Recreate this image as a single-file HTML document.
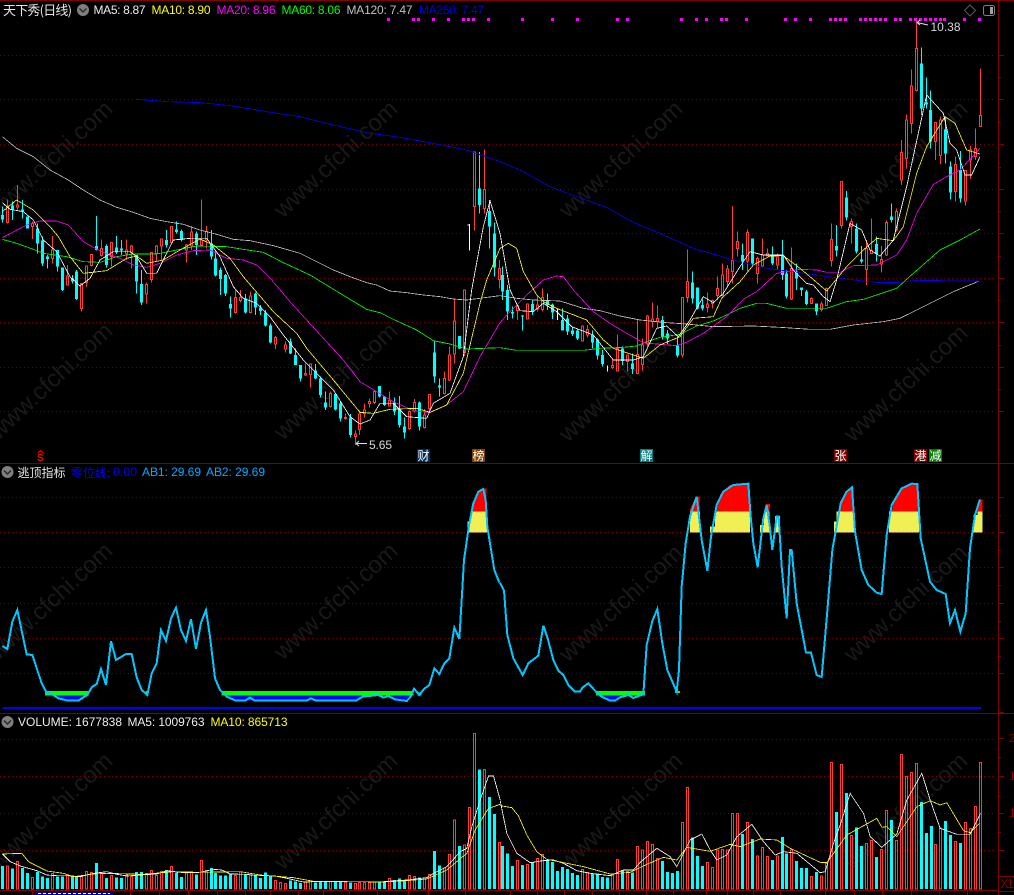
<!DOCTYPE html>
<html><head><meta charset="utf-8"><title>天下秀(日线)</title>
<style>
html,body{margin:0;padding:0;background:#000;width:1014px;height:895px;overflow:hidden}
svg{display:block;position:absolute;left:0;top:0}
text{font-family:"Liberation Sans","WenQuanYi Zen Hei","Noto Sans CJK SC",sans-serif;font-size:12px}
.cj{font-family:"WenQuanYi Zen Hei","Noto Sans CJK SC",sans-serif;font-size:12px}
.wm{font-size:24px;fill:#191919}
.rw{stroke:#ff3c3c;stroke-width:3;fill:none}
.rb{stroke:#ff3c3c;stroke-width:3;fill:#000}
.rv{stroke:#ff3c3c;stroke-width:3;fill:none}
.cw{stroke:#0ff;stroke-width:3;fill:none}
.cb{stroke:#0ff;stroke-width:9;fill:none}
.wt{stroke:#fff;stroke-width:3;fill:none}
.m5{stroke:#fff;stroke-width:2.4;fill:none}
.m10{stroke:#ff0;stroke-width:2.4;fill:none}
.m20{stroke:#f0f;stroke-width:2.4;fill:none}
.m60{stroke:#0f0;stroke-width:2.4;fill:none}
.m120{stroke:#c0c0c0;stroke-width:2.4;fill:none}
.m250{stroke:#00f;stroke-width:2.4;fill:none}
.ab{stroke:#00c8ff;stroke-width:6;fill:none}
.grid{stroke:#6e0000;stroke-width:1;stroke-dasharray:1 3;fill:none}
</style></head><body>
<svg width="1014" height="895" viewBox="0 0 1014 895" xmlns="http://www.w3.org/2000/svg">
<!-- watermark -->
<g class="wm">
<text class="wm" transform="translate(-2,219) rotate(-43)">www.cfchi.com</text>
<text class="wm" transform="translate(283,219) rotate(-43)">www.cfchi.com</text>
<text class="wm" transform="translate(568,219) rotate(-43)">www.cfchi.com</text>
<text class="wm" transform="translate(853,219) rotate(-43)">www.cfchi.com</text>
<text class="wm" transform="translate(-2,441) rotate(-43)">www.cfchi.com</text>
<text class="wm" transform="translate(283,441) rotate(-43)">www.cfchi.com</text>
<text class="wm" transform="translate(568,443) rotate(-43)">www.cfchi.com</text>
<text class="wm" transform="translate(853,443) rotate(-43)">www.cfchi.com</text>
<text class="wm" transform="translate(-2,661) rotate(-43)">www.cfchi.com</text>
<text class="wm" transform="translate(283,661) rotate(-43)">www.cfchi.com</text>
<text class="wm" transform="translate(568,663) rotate(-43)">www.cfchi.com</text>
<text class="wm" transform="translate(853,663) rotate(-43)">www.cfchi.com</text>
<text class="wm" transform="translate(-2,871) rotate(-43)">www.cfchi.com</text>
<text class="wm" transform="translate(283,871) rotate(-43)">www.cfchi.com</text>
<text class="wm" transform="translate(568,871) rotate(-43)">www.cfchi.com</text>
<text class="wm" transform="translate(853,871) rotate(-43)">www.cfchi.com</text>
</g>
<!-- grid -->
<path class="grid" shape-rendering="crispEdges" d="M0 55.5H996M0 99.5H996M0 144.5H996M0 189.5H996M0 233.5H996M0 278.5H996M0 322.5H996M0 367.5H996M0 411.5H996M0 497.5H996M0 532.5H996M0 567.5H996M0 603.5H996M0 638.5H996M0 673.5H996M0 739.5H996M0 776.5H996M0 813.5H996M0 850.5H996"/>
<g shape-rendering="crispEdges" transform="scale(.333333)">
<!-- volume bars left -->
<g transform="translate(.5,2130)">
<path class="cb" d="M7 468V537M37 475V537M67 474V537M82 489V537M112 486V537M127 500V537M142 504V537M172 500V537M187 500V537M217 497V537M229 500V537M289 459V537M319 504V537M349 502V537M364 504V537M409 486V537M424 486V537M499 480V537M529 487V537M544 501V537M589 494V537M634 474V537M646 489V537M661 497V537M676 497V537M691 491V537M736 493V537M766 497V537M781 504V537M796 487V537M811 496V537M871 511V537M886 514V537M901 519V537M946 517V537M961 516V537M976 514V537M1006 514V537M1021 514V537M1051 518V537M1138 517V537M1153 518V537M1183 510V537M1198 505V537M1213 512V537M1258 503V537M1303 423V537M1318 466V537M1378 408V537M1438 178V537M1468 261V537M1483 312V537"/>
<path class="rv" d="M19 468h6V537h-6zM49 454h6V537h-6zM94 502h6V537h-6zM154 491h6V537h-6zM199 497h6V537h-6zM241 500h6V537h-6zM256 484h6V537h-6zM271 487h6V537h-6zM301 487h6V537h-6zM331 496h6V537h-6zM376 495h6V537h-6zM391 500h6V537h-6zM436 490h6V537h-6zM451 481h6V537h-6zM466 497h6V537h-6zM481 484h6V537h-6zM511 469h6V537h-6zM556 489h6V537h-6zM571 488h6V537h-6zM601 451h6V537h-6zM616 482h6V537h-6zM703 496h6V537h-6zM718 486h6V537h-6zM748 495h6V537h-6zM823 511h6V537h-6zM838 517h6V537h-6zM853 520h6V537h-6zM913 516h6V537h-6zM928 513h6V537h-6zM988 514h6V537h-6zM1033 517h6V537h-6zM1063 520h6V537h-6zM1075 518h6V537h-6zM1090 518h6V537h-6zM1105 517h6V537h-6zM1120 516h6V537h-6zM1165 505h6V537h-6zM1225 496h6V537h-6zM1240 499h6V537h-6zM1270 504h6V537h-6zM1285 493h6V537h-6zM1330 474h6V537h-6zM1345 433h6V537h-6zM1360 330h6V537h-6zM1390 405h6V537h-6zM1405 292h6V537h-6zM1420 70h6V537h-6zM1450 178h6V537h-6zM1495 397h6V537h-6z"/>
<path class="m5" d="M7 432L30 455L60 468L110 482L140 495L170 497L200 497L240 500L280 490L320 485L350 493L380 498L420 495L470 492L500 482L550 488L600 487L640 478L665 480L690 492L740 493L770 497L820 497L860 505L910 516L950 515L1150 515L1220 510L1280 503L1300 490L1340 470L1380 425L1400 415L1415 350L1440 270L1465 198L1480 198L1500 270"/>
<path class="m10" d="M7 432L65 430L85 455L140 483L190 490L220 500L280 492L320 490L430 493L520 485L600 487L720 485L780 495L880 503L940 514L1150 516L1220 512L1280 507L1340 480L1400 430L1425 360L1465 295L1500 283"/>
</g>
<!-- volume bars right -->
<g transform="translate(1500.5,2130)">
<path class="cb" d="M7 408V537M22 430V537M37 468V537M67 465V537M97 457V537M142 450V537M157 456V537M172 483V537M187 471V537M202 477V537M217 489V537M232 495V537M277 490V537M292 490V537M307 501V537M322 503V537M367 480V537M397 487V537M487 453V537M502 486V537M517 489V537M532 483V537M577 382V537M592 438V537M607 468V537M727 372V537M757 387V537M817 450V537M847 381V537M859 430V537M889 453V537M904 474V537M919 474V537M949 486V537M1009 306V537M1039 249V537M1069 352V537M1084 408V537M1129 441V537M1174 330V537M1264 276V537M1279 369V537M1294 348V537M1336 333V537M1351 375V537M1381 399V537"/>
<path class="rv" d="M49 451h6V537h-6zM79 463h6V537h-6zM109 445h6V537h-6zM124 433h6V537h-6zM244 478h6V537h-6zM259 487h6V537h-6zM334 497h6V537h-6zM349 448h6V537h-6zM379 484h6V537h-6zM409 409h6V537h-6zM424 420h6V537h-6zM439 394h6V537h-6zM454 403h6V537h-6zM469 445h6V537h-6zM544 337h6V537h-6zM559 232h6V537h-6zM619 457h6V537h-6zM634 472h6V537h-6zM649 420h6V537h-6zM664 418h6V537h-6zM679 420h6V537h-6zM694 310h6V537h-6zM709 310h6V537h-6zM739 337h6V537h-6zM769 438h6V537h-6zM784 412h6V537h-6zM799 439h6V537h-6zM829 438h6V537h-6zM871 420h6V537h-6zM931 499h6V537h-6zM961 498h6V537h-6zM976 460h6V537h-6zM991 157h6V537h-6zM1021 163h6V537h-6zM1051 376h6V537h-6zM1096 400h6V537h-6zM1111 391h6V537h-6zM1141 418h6V537h-6zM1156 301h6V537h-6zM1186 391h6V537h-6zM1201 133h6V537h-6zM1216 199h6V537h-6zM1231 187h6V537h-6zM1246 160h6V537h-6zM1303 403h6V537h-6zM1318 354h6V537h-6zM1363 394h6V537h-6zM1393 337h6V537h-6zM1408 355h6V537h-6zM1423 289h6V537h-6zM1438 157h6V537h-6z"/>
<path class="m5" d="M0 272L20 370L50 430L90 458L130 452L160 450L190 460L230 482L270 490L330 497L370 480L400 480L420 457L470 415L510 440L530 470L570 390L605 372L630 420L650 450L680 435L710 380L755 343L790 395L825 435L850 425L890 430L960 488L975 485L1000 400L1020 345L1050 250L1090 310L1110 380L1145 412L1190 372L1220 270L1265 190L1290 270L1320 355L1370 373L1410 373L1441 310"/>
<path class="m10" d="M0 287L35 293L55 318L80 375L110 425L140 448L180 456L250 470L330 492L390 487L440 463L490 442L530 450L560 412L630 424L690 403L720 410L780 387L830 390L870 415L960 457L980 458L1040 375L1130 325L1145 352L1160 350L1190 380L1250 290L1290 272L1320 285L1340 278L1390 362L1410 368L1438 340"/>
</g>
<!-- candles zoom10 group -->
<g transform="translate(.5,480)">
<path class="cw" d="M7 140V188M37 125V180M67 120V175M82 170V205M112 190V280M127 230V318M142 285V325M172 270V335M187 322V393M217 345V370M229 330V420M289 168V272M319 253V323M349 228V282M364 240V285M409 285V400M424 330V435M499 210V262M529 185V220M544 208V245M589 215V285M634 210V298M646 275V350M661 322V405M676 342V408M691 410V472"/>
<path class="cb" d="M7 165V178M37 137V150M67 148V153M82 170V205M112 205V250M127 242V310M142 289V297M172 270V320M187 322V390M217 355V365M229 335V417M289 258V270M319 258V315M349 262V278M364 265V272M409 285V365M424 372V428M499 240V255M529 208V216M544 213V240M589 220V255M634 250V290M646 295V347M661 330V357M676 345V400M691 432V445"/>
<path class="rw" d="M22 118V190M52 75V150M97 185V237M157 228V310M202 315V375M244 370V455M259 318V380M274 283V320M304 238V290M334 248V320M379 238V300M394 255V325M439 368V430M454 278V368M469 255V305M484 235V300M514 198V250M559 252V308M574 198V270M604 118V260M619 198V265"/>
<path class="rb" d="M19 138h6V188h-6zM49 135h6V141h-6zM94 190h6V200h-6zM154 270h6V295h-6zM199 348h6V375h-6zM241 370h6V445h-6zM256 318h6V368h-6zM271 283h6V317h-6zM301 265h6V287h-6zM331 248h6V290h-6zM376 270h6V282h-6zM391 258h6V278h-6zM436 374h6V402h-6zM451 278h6V358h-6zM466 258h6V280h-6zM481 237h6V258h-6zM511 200h6V248h-6zM556 255h6V270h-6zM571 216h6V258h-6zM601 240h6V255h-6zM616 215h6V240h-6z"/>
</g>
<!-- candles zoom3 group -->
<g transform="translate(.5,840)">
<path class="cw" d="M736 42V100M766 38V105M781 75V105M796 90V140M811 130V190M871 175V222M886 205V255M901 255V305M946 252V297M961 290V352M976 335V390M1006 340V392M1021 365V425M1051 402V472M1138 318V352M1153 348V378M1183 352V405M1198 348V442M1213 412V475M1258 365V452M1303 182V308M1318 295V350M1378 168V207"/>
<path class="cb" d="M736 55V97M766 40V83M781 83V93M796 97V137M811 137V187M871 185V220M886 225V255M901 255V295M946 272V295M961 295V345M976 367V383M1006 342V388M1021 370V415M1051 412V465M1138 318V350M1153 350V375M1183 367V395M1198 388V435M1213 440V458M1258 367V440M1303 218V290M1318 317V322M1378 168V205"/>
<path class="rw" d="M706 30V100M721 30V68M751 35V100M826 168V207M856 185V218M916 250V288M931 252V323M991 335V382M1036 400V418M1066 452V495M1078 392V465M1093 370V412M1108 355V382M1123 330V372M1168 335V380M1228 392V450M1243 357V397M1273 387V445M1288 342V395M1333 275V343M1348 200V303M1363 55V250M1393 30V228"/>
<path class="rb" d="M703 52h6V98h-6zM718 53h6V62h-6zM748 48h6V98h-6zM823 172h6V192h-6zM853 195h6V207h-6zM913 280h6V285h-6zM928 252h6V283h-6zM988 340h6V380h-6zM1033 412h6V416h-6zM1063 462h6V470h-6zM1075 402h6V448h-6zM1090 390h6V400h-6zM1105 365h6V370h-6zM1120 335h6V368h-6zM1165 362h6V378h-6zM1225 395h6V445h-6zM1240 367h6V393h-6zM1270 405h6V442h-6zM1285 343h6V385h-6zM1330 295h6V340h-6zM1345 225h6V300h-6zM1360 123h6V222h-6zM1390 30h6V218h-6z"/>
</g>
<!-- candles zoom1 group -->
<g transform="translate(.5,0)">
<path class="wt" d="M1408 672V752M1402 675H1408"/>
<path class="cw" d="M1438 456V640M1468 600V745M1483 668V830"/>
<path class="cb" d="M1438 565V615M1468 633V680M1483 700V803"/>
<path class="rw" d="M1423 456V692M1453 448V640M1498 780V865"/>
<path class="rb" d="M1420 456h6V620h-6zM1450 568h6V625h-6zM1495 805h6V838h-6z"/>
</g>
<!-- candles zoom4 group -->
<g transform="translate(1500.5,720)">
<path class="wt" d="M172 205V240M322 377V395"/>
<path class="cw" d="M7 80V180M22 135V240M37 200V235M67 225V272M97 180V225M142 160V210M157 190V237M187 205V272M202 225V285M217 260V288M232 265V300M277 272V325M292 295V358M307 330V380M367 320V375M397 340V402M487 228V298M502 270V312M532 290V352M577 95V190M592 143V208M607 178V212M904 142V168M919 150V195M949 190V225"/>
<path class="cb" d="M7 105V155M22 150V215M37 216V220M67 226V230M97 192V215M142 180V195M157 193V218M187 240V272M202 235V275M217 272V282M232 272V295M277 285V308M292 298V347M307 345V372M367 325V363M397 370V387M487 240V290M502 280V295M532 315V347M577 128V175M592 143V205M607 195V205M904 142V150M919 155V192M949 190V215"/>
<path class="rw" d="M52 197V240M82 192V237M112 165V215M127 145V215M247 258V305M262 255V292M337 360V387M352 283V395M382 345V395M412 237V402M427 295V392M442 225V320M457 187V262M472 197V265M547 172V352M562 28V188M622 157V218M637 178V205M652 110V180M667 70V170M682 75V140M934 172V192M964 185V215M979 142V197"/>
<path class="rb" d="M49 197h6V212h-6zM79 192h6V237h-6zM109 195h6V207h-6zM124 172h6V208h-6zM244 258h6V303h-6zM259 268h6V285h-6zM334 377h6V383h-6zM349 325h6V393h-6zM379 345h6V365h-6zM409 343h6V400h-6zM424 315h6V373h-6zM439 228h6V312h-6zM454 237h6V245h-6zM469 235h6V245h-6zM544 172h6V345h-6zM559 125h6V172h-6zM619 192h6V203h-6zM634 182h6V190h-6zM649 145h6V167h-6zM664 105h6V167h-6zM679 87h6V125h-6zM931 175h6V190h-6zM961 192h6V208h-6zM976 145h6V197h-6z"/>
</g>
<!-- candles zoom2 group -->
<g transform="translate(1500.5,0)">
<path class="cw" d="M727 730V810M757 715V795M817 740V795M847 720V840M859 810V895M889 790V870M1009 675V770M1039 573V662M1069 670V760M1084 738V790M1129 710V785M1174 610V668M1264 142V345M1279 232V325M1291 272V445M1336 350V490M1351 485V598M1381 453V608"/>
<path class="cb" d="M727 765V785M757 715V790M817 765V790M847 765V825M859 820V890M889 815V835M1009 738V752M1039 592V652M1069 685V755M1084 778V785M1129 732V762M1174 650V660M1264 190V325M1279 308V313M1291 330V425M1336 388V460M1351 500V578M1381 510V595"/>
<path class="rw" d="M697 618V850M712 695V770M742 688V815M772 770V850M787 715V800M802 745V770M832 760V810M874 742V900M994 670V800M1024 545V685M1054 655V730M1099 720V855M1114 655V762M1144 738V818M1159 662V768M1189 625V695M1204 420V555M1219 343V505M1234 208V400M1249 62V275M1306 367V480M1321 350V492M1366 470V605M1396 510V617M1411 438V537M1426 385V480M1441 205V380"/>
<path class="rb" d="M694 782h6V815h-6zM709 725h6V745h-6zM739 697h6V783h-6zM769 775h6V820h-6zM784 765h6V798h-6zM799 760h6V768h-6zM829 770h6V795h-6zM871 805h6V897h-6zM991 718h6V782h-6zM1021 545h6V677h-6zM1051 665h6V680h-6zM1096 745h6V808h-6zM1111 752h6V760h-6zM1141 778h6V792h-6zM1156 668h6V765h-6zM1186 635h6V690h-6zM1201 458h6V540h-6zM1216 360h6V475h-6zM1231 258h6V370h-6zM1246 145h6V272h-6zM1303 367h6V425h-6zM1318 360h6V467h-6zM1363 493h6V575h-6zM1393 512h6V603h-6zM1408 450h6V480h-6zM1423 445h6V470h-6zM1438 347h6V380h-6z"/>
</g>
<!-- MA120 -->
<path class="m120" d="M7 410L50 445L100 470L150 510L205 540L250 570L300 600L350 622L400 637L450 655L500 665L550 673L600 690L650 703L700 718L750 722L820 737L900 760L950 785L1000 810L1050 830L1100 848L1130 855L1170 873L1220 878L1270 885L1320 890L1360 897L1400 900L1500 887L1550 895L1600 900L1680 903L1750 925L1800 932L1860 948L1920 960L2000 968L2060 972L2140 980L2260 978L2340 982L2430 988L2490 988L2560 975L2650 965L2700 955L2750 930L2800 905L2860 875L2940 842"/>
<!-- MA250 -->
<path class="m250" d="M410 298L500 305L600 308L700 318L800 335L900 350L1000 375L1100 398L1200 412L1300 430L1400 450L1500 485L1560 510L1650 560L1730 590L1820 622L1900 667L1980 700L2080 745L2200 780L2300 805L2400 818L2500 832L2580 842L2640 848L2700 847L2750 841L2900 843L2940 843"/>
<!-- MA60 -->
<path class="m60" d="M7 718L50 730L100 748L130 760L200 770L250 785L300 787L350 770L400 762L470 762L530 750L590 738L680 740L730 748L790 757L850 788L930 825L1050 898L1100 928L1140 938L1180 958L1250 990L1300 1022L1350 1032L1400 1047L1500 1043L1550 1051L1750 1051L1800 1045L1870 1042L1910 1038L1940 1025L1980 1012L2040 1003L2090 978L2140 963L2180 945L2220 925L2270 910L2300 910L2360 925L2480 925L2540 905L2590 898L2690 865L2740 820L2820 750L2880 720L2940 687"/>
<!-- MA20 -->
<path class="m20" d="M7 713L80 675L120 663L170 663L205 675L250 725L280 742L320 762L360 775L400 795L440 802L480 790L530 765L580 752L630 750L680 775L730 780L770 795L815 840L870 905L920 960L970 1015L1030 1080L1080 1145L1130 1175L1180 1205L1240 1232L1290 1238L1340 1215L1390 1175L1440 1070L1500 968L1530 935L1580 885L1630 840L1670 828L1690 830L1720 870L1780 935L1830 970L1880 1000L1930 1028L1970 1032L2030 1037L2060 1027L2110 1000L2180 950L2230 898L2270 875L2330 820L2400 808L2450 810L2480 817L2520 817L2560 797L2630 795L2690 765L2720 720L2750 640L2800 553L2840 530L2880 510L2940 445"/>
<!-- MA10 -->
<path class="m10" d="M7 635L50 600L100 630L150 680L175 710L210 770L250 820L320 812L380 775L410 768L440 790L490 780L540 750L600 717L640 735L690 775L730 830L790 900L820 935L890 1000L920 1045L1000 1140L1080 1237L1120 1240L1170 1228L1250 1225L1290 1237L1340 1215L1390 1120L1440 910L1460 840L1500 745L1525 730L1550 745L1570 815L1610 885L1630 905L1670 925L1760 960L1810 1020L1840 1045L1930 1075L1980 1035L2040 1010L2080 955L2140 950L2165 895L2220 845L2260 795L2310 768L2350 767L2400 805L2430 830L2480 873L2540 800L2590 750L2630 715L2650 718L2680 722L2710 680L2750 520L2780 440L2835 350L2865 370L2900 450L2940 462"/>
<!-- MA5 -->
<path class="m5" d="M7 608L30 628L70 635L100 660L130 720L170 755L210 830L240 858L270 835L300 780L340 755L390 755L410 770L440 820L470 820L520 720L570 715L620 715L660 770L700 860L730 895L770 910L810 950L850 1005L910 1080L960 1130L1000 1170L1050 1250L1080 1272L1110 1260L1140 1210L1180 1210L1220 1250L1280 1255L1300 1210L1350 1180L1390 1070L1415 870L1450 680L1470 602L1500 700L1530 870L1560 932L1600 935L1630 910L1670 935L1715 980L1780 1005L1840 1080L1900 1080L1930 1070L1970 985L2000 978L2035 1010L2070 960L2110 890L2140 908L2170 880L2220 800L2250 755L2290 765L2350 765L2380 810L2420 850L2440 855L2470 890L2490 905L2510 840L2550 670L2585 690L2610 750L2640 768L2680 720L2720 560L2780 285L2830 340L2850 430L2870 450L2895 525L2915 525L2940 470"/>
<!-- AB panel fills -->
<g transform="translate(0,1380)">
<path fill="#00f" d="M165 707H250L235 722H205L175 715zM680 707H1085L1068 722H708zM1175 707H1230L1220 723H1185z"/>
<path fill="#0f0" d="M135 693H265V707H135zM437 693H445V707H437zM665 693H1240V707H665zM1252 697H1265V707H1252z"/>
<path fill="#f0f055" d="M1402 185H1412V155H1462V218H1402z"/>
<path fill="#f00" d="M1418 155L1420 130L1435 95L1460 84V155z"/>
<path fill="#00f" d="M7 741H1500V747H7z"/>
</g>
<g transform="translate(1500,1380)">
<path fill="#00f" d="M305 707H360L345 722H330z"/>
<path fill="#0f0" d="M288 693H435V707H288zM525 693H540V699H525z"/>
<path fill="#f0f055" d="M570 155H600V218H570zM630 200H645V155H750V218H630zM780 195H792V155H808V218H780zM825 168H840V218H825zM1002 185H1010V155H1063V218H1002zM1167 155H1257V218H1167zM1420 165H1432V155H1448V218H1420z"/>
<path fill="#f00" d="M570 155V148L585 115L598 108V155zM650 155L660 105L690 75L748 70V155zM796 155V132H810L808 155zM1018 155L1020 125L1040 92L1060 82V155zM1175 155L1185 110L1215 78L1250 70L1257 155zM1432 155L1436 118H1448V155z"/>
<path fill="#00f" d="M0 741H1443V747H0z"/>
</g>
<g transform="translate(0,1380)"><path class="ab" d="M7 558L22 567L37 485L52 450L80 583L97 585L125 670L140 698L155 702L175 715L205 722L235 722L250 712L262 705L275 682L290 672L303 627L318 675L333 543L348 600L378 582L395 582L410 652L425 690L442 705L455 640L470 610L483 510L498 543L513 475L528 443L543 510L558 543L573 477L588 567L603 488L618 450L630 530L645 655L660 690L680 710L708 722L735 722L750 713L765 722L920 722L932 715L948 722L1068 722L1088 710L1135 705L1150 713L1165 708L1185 718L1220 723L1232 710L1242 686L1258 705L1272 687L1288 675L1303 625L1318 642L1333 610L1348 595L1363 503L1378 537L1385 420L1392 300L1408 190L1420 130L1435 95L1450 87L1457 120L1462 200L1470 250L1483 330L1498 368"/></g>
<g transform="translate(1500,1380)"><path class="ab" d="M0 368L12 392L22 525L40 595L68 645L85 610L115 587L130 497L143 535L160 600L175 632L190 645L205 675L225 695L240 695L248 682L265 670L290 697L305 710L330 722L345 722L360 712L385 705L400 714L430 703L440 555L457 483L472 447L487 550L502 630L530 695L537 630L545 380L557 250L570 170L590 110L605 240L622 332L633 230L650 135L670 95L700 75L745 71L752 170L760 250L773 322L790 175L800 135L810 205L817 270L830 170L836 170L845 320L860 475L870 270L875 270L890 430L918 578L933 578L950 645L965 651L983 440L997 270L1022 130L1040 95L1056 82L1065 215L1085 330L1105 375L1130 398L1145 402L1160 225L1175 135L1205 85L1235 71L1252 72L1262 235L1290 365L1310 390L1337 402L1350 490L1365 450L1381 515L1397 460L1410 265L1425 165L1440 118"/></g>
<!-- magenta dots -->
<g transform="translate(.5,0)"><path stroke="#f0f" stroke-width="9" fill="none" d="M1165 54v9M1240 54v9M1255 54v9M1300 54v9M1345 54v9M1390 54v9M1405 54v9M1420 54v9M1465 54v9M1567 54v9M1657 54v9M1732 54v9M1852 54v9M1882 54v9M2044 54v9M2089 54v9M2119 54v9M2164 54v9M2179 54v9M2239 54v9M2356 54v9M2386 54v9M2431 54v9M2491 54v9M2506 54v9M2521 54v9M2536 54v9M2581 54v9M2596 54v9M2611 54v9M2626 54v9M2641 54v9M2656 54v9M2686 54v9M2701 54v9M2731 54v9M2746 54v9M2761 54v9M2776 54v9M2791 54v9M2806 54v9M2821 54v9M2833 54v9M2893 54v9M2938 54v9"/></g>
</g>
<!-- frame lines -->
<g shape-rendering="crispEdges" fill="#800000">
<rect x="0" y="0" width="1014" height="1"/>
<rect x="0" y="463" width="1014" height="1"/>
<rect x="0" y="713" width="1014" height="1"/>
<rect x="0" y="890" width="998" height="1"/>
<rect x="998" y="891" width="16" height="1"/>
<rect x="998" y="876" width="16" height="1"/>
<rect x="998" y="0" width="1" height="895"/>
</g>
<path shape-rendering="crispEdges" stroke="#800000" stroke-width="1" fill="none" d="M998 55.5H1004M998 77.5H1001M998 99.5H1004M998 122.5H1001M998 144.5H1004M998 167.5H1001M998 189.5H1004M998 211.5H1001M998 233.5H1004M998 256.5H1001M998 278.5H1004M998 300.5H1001M998 322.5H1004M998 345.5H1001M998 367.5H1004M998 389.5H1001M998 411.5H1004M998 497.5H1004M998 515.5H1001M998 532.5H1004M998 550.5H1001M998 567.5H1004M998 585.5H1001M998 603.5H1004M998 621.5H1001M998 638.5H1004M998 656.5H1001M998 673.5H1004M998 712.5H1004M998 738.5H1004M998 757.5H1001M998 776.5H1004M998 796.5H1001M998 813.5H1004M998 832.5H1001M998 850.5H1004M32.5 891V895M130.5 891V895M159.5 891V895M188.5 891V895M217.5 891V895M245.5 891V895M270.5 891V895M298.5 891V895M323.5 891V895M349.5 891V895M377.5 891V895M408.5 891V895M428.5 891V895M465.5 891V895M510.5 891V895M537.5 891V895M564.5 891V895M592.5 891V895M619.5 891V895M646.5 891V895M673.5 891V895M706.5 891V895M727.5 891V895M753.5 891V895M780.5 891V895M825.5 891V895M854.5 891V895M882.5 891V895M911.5 891V895M939.5 891V895M967.5 891V895"/>
<text x="1009" y="742" fill="#800000">2</text>
<text x="1009" y="780" fill="#800000">1</text>
<text x="1009" y="817" fill="#800000">1</text>
<text x="1000" y="888" fill="#800000" font-size="13" style="font-size:13px" textLength="14">X1</text>
<!-- date box -->
<rect x="36" y="892" width="77" height="3" fill="#000080" shape-rendering="crispEdges"/>
<path shape-rendering="crispEdges" stroke="#fff" stroke-dasharray="3 2" d="M38 893.5H110"/>
<!-- header top -->
<text class="cj" x="3" y="15" fill="#e6e6e6" style="font-size:13px" textLength="69">天下秀(日线)</text>
<circle cx="83" cy="10" r="6" fill="#7f7f7f"/><path d="M79.5 8.5L83 12L86.5 8.5" stroke="#2a2a2a" stroke-width="1.5" fill="none"/>
<text x="93.5" y="14" fill="#eee" textLength="52">MA5: 8.87</text>
<text x="151.5" y="14" fill="#ff0" textLength="59">MA10: 8.90</text>
<text x="216.5" y="14" fill="#f0f" textLength="59">MA20: 8.96</text>
<text x="281.5" y="14" fill="#0f0" textLength="59">MA60: 8.06</text>
<text x="346.5" y="14" fill="#c0c0c0" textLength="66">MA120: 7.47</text>
<text x="419" y="14" fill="#0000e6" textLength="65">MA250: 7.47</text>
<!-- top right icons -->
<path d="M970 5L975.5 10.5L970 16L964.5 10.5Z" fill="none" stroke="#5a5a5a"/>
<rect x="983.5" y="5.5" width="11" height="10" rx="2" fill="none" stroke="#808080"/>
<rect x="990" y="7" width="3" height="7" fill="#a0a0a0"/>
<!-- price markers -->
<path d="M928 25L917 22.5M917 22.5L920 20M917 22.5L920 25" stroke="#e0e0e0" fill="none"/>
<text x="930.5" y="31" fill="#d8d8d8" textLength="30">10.38</text>
<path d="M367 443.5H356M356 443.5L359 441M356 443.5L359 446" stroke="#e0e0e0" fill="none"/>
<text x="369" y="449" fill="#d8d8d8" textLength="23">5.65</text>
<!-- signal labels -->
<path d="M38 453L40.5 450.5L43 453" stroke="#f00" fill="none"/>
<text x="37" y="461" fill="#f00" style="font-size:10px;font-weight:bold">S</text>
<rect x="417" y="449" width="13" height="13" fill="#003060"/><text class="cj" x="417.5" y="460" fill="#fff">财</text>
<rect x="472" y="449" width="13" height="13" fill="#804000"/><text class="cj" x="472.5" y="460" fill="#fff">榜</text>
<rect x="640" y="449" width="13" height="13" fill="#008080"/><text class="cj" x="640.5" y="460" fill="#fff">解</text>
<rect x="834" y="449" width="13" height="13" fill="#800000"/><text class="cj" x="834.5" y="460" fill="#fff">张</text>
<rect x="914" y="449" width="13" height="13" fill="#800000"/><text class="cj" x="914.5" y="460" fill="#fff">港</text>
<rect x="929" y="449" width="13" height="13" fill="#008000"/><text class="cj" x="929.5" y="460" fill="#fff">减</text>
<!-- panel 2 header -->
<circle cx="7.5" cy="472" r="6" fill="#7f7f7f"/><path d="M4 470.5L7.5 474L11 470.5" stroke="#2a2a2a" stroke-width="1.5" fill="none"/>
<text class="cj" x="17.5" y="477" fill="#e6e6e6" textLength="48">逃顶指标</text>
<text class="cj" x="71" y="477" fill="#0000ff" textLength="39">零位线:</text>
<text x="113" y="476" fill="#0000ff" textLength="24">0.00</text>
<text x="142" y="476" fill="#00aaff" textLength="59">AB1: 29.69</text>
<text x="206" y="476" fill="#00aaff" textLength="59">AB2: 29.69</text>
<!-- panel 3 header -->
<circle cx="7.5" cy="722" r="6" fill="#7f7f7f"/><path d="M4 720.5L7.5 724L11 720.5" stroke="#2a2a2a" stroke-width="1.5" fill="none"/>
<text x="18" y="726" fill="#eee" textLength="104">VOLUME: 1677838</text>
<text x="127.5" y="726" fill="#eee" textLength="77">MA5: 1009763</text>
<text x="210.5" y="726" fill="#ff0" textLength="77">MA10: 865713</text>
</svg>
</body></html>
